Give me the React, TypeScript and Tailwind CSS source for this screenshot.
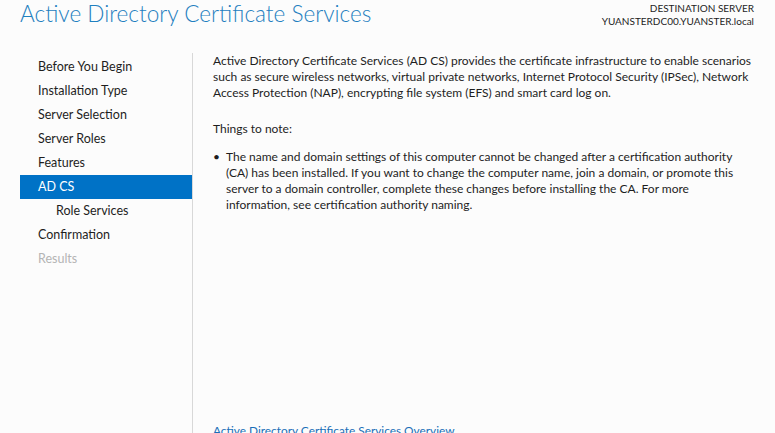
export default function App() {
  const steps = [
    { label: "Before You Begin" },
    { label: "Installation Type" },
    { label: "Server Selection" },
    { label: "Server Roles" },
    { label: "Features" },
    { label: "AD CS", active: true },
    { label: "Role Services", sub: true },
    { label: "Confirmation" },
    { label: "Results", disabled: true },
  ];

  return (
    <div className="w-[775px] h-[433px] overflow-hidden bg-[#fcfcfc] text-[#1e1e1e] font-['Lato','Liberation_Sans',sans-serif] flex flex-col">
      <div className="flex justify-between items-start h-[40px] pl-[20px] pr-[21px]">
        <h1 className="text-[22.6px] leading-[28px] font-light text-[#1f80c0]">
          Active Directory Certificate Services
        </h1>
        <div className="text-right text-[10px] leading-[13px] pt-[2px] text-[#1e1e1e]">
          <div>DESTINATION SERVER</div>
          <div>YUANSTERDC00.YUANSTER.local</div>
        </div>
      </div>

      <div className="flex flex-1 min-h-0">
        <div className="w-[172px] ml-[20px] pt-[15px] shrink-0">
          {steps.map((s) => (
            <div
              key={s.label}
              className={
                "h-[24px] leading-[24px] text-[12.5px] whitespace-nowrap " +
                (s.active
                  ? "bg-[#0072c6] text-white pl-[18px]"
                  : s.sub
                  ? "pl-[36px]"
                  : "pl-[18px]") +
                (s.disabled ? " text-[#b4b4b4]" : "")
              }
            >
              {s.label}
            </div>
          ))}
        </div>

        <div className="w-px bg-[#d8d8d8] mt-[13px] shrink-0" />

        <div className="flex-1 pl-[20px] pt-[13px] text-[12px] leading-[16px] flex flex-col">
          <p className="whitespace-nowrap">
            Active Directory Certificate Services (AD CS) provides the certificate infrastructure to enable scenarios
            <br />
            such as secure wireless networks, virtual private networks, Internet Protocol Security (IPSec), Network
            <br />
            Access Protection (NAP), encrypting file system (EFS) and smart card log on.
          </p>
          <p className="mt-[20px]">Things to note:</p>
          <ul className="mt-[12px]">
            <li className="flex whitespace-nowrap">
              <span className="w-[13px] shrink-0">•</span>
              <span>
                The name and domain settings of this computer cannot be changed after a certification authority
                <br />
                (CA) has been installed. If you want to change the computer name, join a domain, or promote this
                <br />
                server to a domain controller, complete these changes before installing the CA. For more
                <br />
                information, see certification authority naming.
              </span>
            </li>
          </ul>
          <div className="mt-auto translate-y-[6px]">
            <span className="text-[#1a6fb8] text-[11.85px]">Active Directory Certificate Services Overview</span>
          </div>
        </div>
      </div>
    </div>
  );
}
